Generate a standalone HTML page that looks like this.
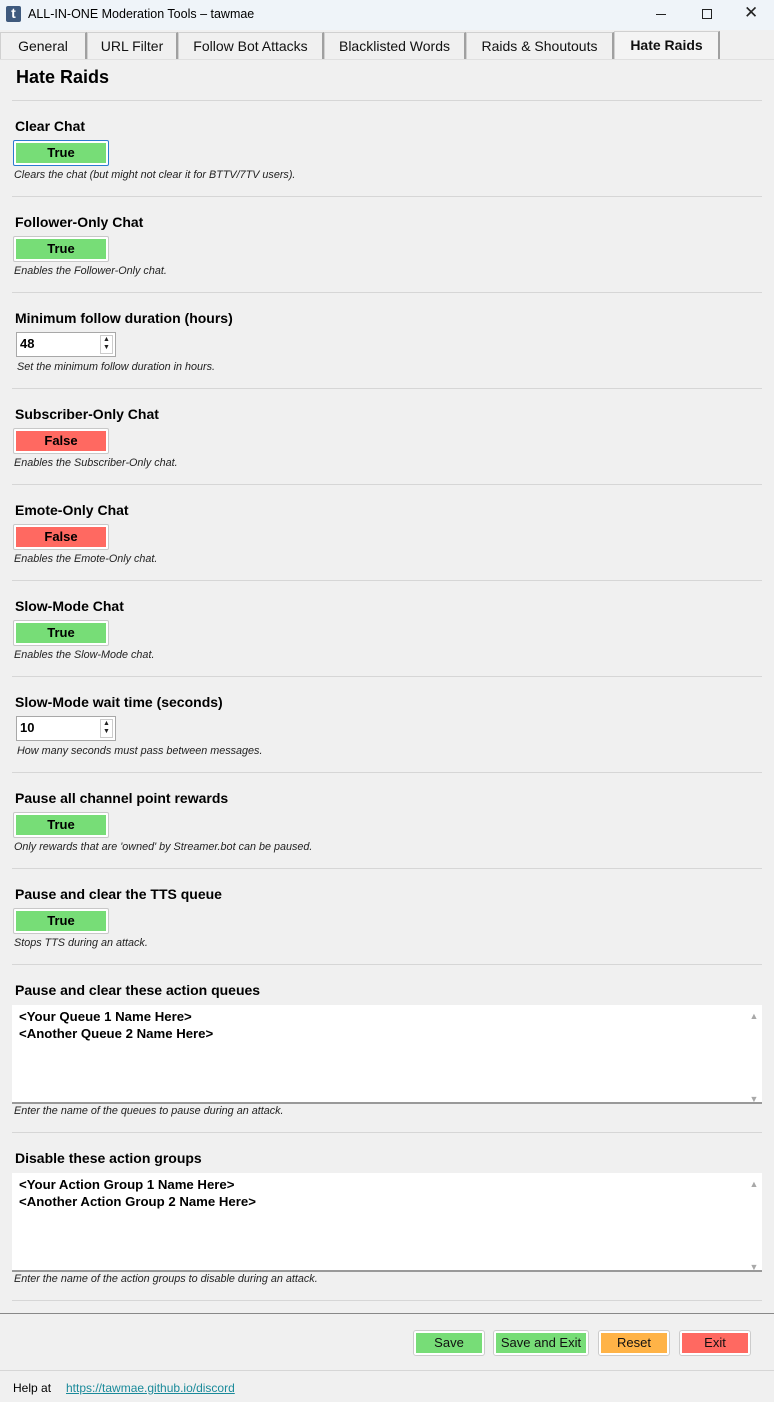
<!DOCTYPE html>
<html><head><meta charset="utf-8"><style>
*{box-sizing:border-box;margin:0;padding:0}
body{width:774px;height:1402px;background:#f0f0f0;font-family:"Liberation Sans",sans-serif;position:relative;overflow:hidden;color:#000}
.a{position:absolute}
.title{left:0;top:0;width:774px;height:30px;background:#eff4f9}
.tab{position:absolute;top:32px;height:27px;border:1px solid #d0d0d0;border-bottom:none;background:#f0f0f0;font-size:14px;text-align:center;line-height:27px;color:#111;border-right:2px solid #a0a0a0}
.lbl{position:absolute;left:15px;font-size:14px;font-weight:bold}
.btn{position:absolute;left:13px;width:96px;height:26px;border:1px solid #c8c8c8;border-radius:2px;padding:2px;background:#fff}
.btn div{width:100%;height:100%;font-size:13px;font-weight:bold;text-align:center;line-height:20px}
.t div{background:#77dd77}.f div{background:#ff6961}
.desc{position:absolute;left:14px;font-size:10.8px;font-style:italic;color:#222}
.hr{position:absolute;left:12px;width:750px;height:1px;background:#d6d6d6}
.num{position:absolute;left:16px;width:100px;height:25px;border:1px solid #a8a8a8;background:#fff;font-size:13px;font-weight:bold;padding:3px 0 0 3px}
.spin{position:absolute;right:2px;top:2px;width:13px;height:19px;border:1px solid #ccc;font-size:7px;line-height:8px;text-align:center;color:#222}
.ta{position:absolute;left:12px;width:750px;height:99px;background:#fff;border-bottom:2px solid #999;font-size:13.2px;font-weight:bold;padding:3px 7px;line-height:17px}
.sb{position:absolute;right:0;top:0;width:16px;height:97px;background:#fff;color:#a8a8a8;font-size:9px;text-align:center}
.bb{position:absolute;top:1330px;height:26px;border:1px solid #ccc;border-radius:3px;padding:2px;background:#fff}
.bb div{height:100%;font-size:13px;text-align:center;line-height:20px;color:#111}
</style></head><body>
<div class="a title"></div>
<div class="a" style="left:6px;top:6px;width:15px;height:16px;background:#3f5a7e;border-radius:2px;color:#fff;font-weight:bold;font-size:14px;line-height:15px;text-align:center">t</div>
<div class="a" style="left:28px;top:7px;font-size:12.5px">ALL-IN-ONE Moderation Tools – tawmae</div>
<div class="a" style="left:656px;top:14px;width:10px;height:1px;background:#222"></div>
<div class="a" style="left:702px;top:9px;width:10px;height:10px;border:1px solid #222"></div>
<div class="a" style="left:744px;top:3px;font-size:17px;color:#222">✕</div>
<div class="tab" style="left:0;width:87px">General</div>
<div class="tab" style="left:87px;width:91px">URL Filter</div>
<div class="tab" style="left:178px;width:146px">Follow Bot Attacks</div>
<div class="tab" style="left:324px;width:142px">Blacklisted Words</div>
<div class="tab" style="left:466px;width:148px">Raids &amp; Shoutouts</div>
<div class="tab" style="left:614px;width:106px;font-weight:bold;background:#f4f4f4;top:31px;height:28px">Hate Raids</div>
<div class="a" style="left:0;top:59px;width:774px;height:1px;background:#e0e0e0"></div>
<div class="a" style="left:16px;top:67px;font-size:18px;font-weight:bold">Hate Raids</div>

<div class="hr" style="top:100px"></div>
<div class="lbl" style="top:118px">Clear Chat</div>
<div class="btn t" style="top:140px;border:1px solid #2b7bd0"><div>True</div></div>
<div class="desc" style="top:169px">Clears the chat (but might not clear it for BTTV/7TV users).</div>

<div class="hr" style="top:196px"></div>
<div class="lbl" style="top:214px">Follower-Only Chat</div>
<div class="btn t" style="top:236px"><div>True</div></div>
<div class="desc" style="top:265px">Enables the Follower-Only chat.</div>

<div class="hr" style="top:292px"></div>
<div class="lbl" style="top:310px">Minimum follow duration (hours)</div>
<div class="num" style="top:332px">48<div class="spin">▲<br>▼</div></div>
<div class="desc" style="left:17px;top:361px">Set the minimum follow duration in hours.</div>

<div class="hr" style="top:388px"></div>
<div class="lbl" style="top:406px">Subscriber-Only Chat</div>
<div class="btn f" style="top:428px"><div>False</div></div>
<div class="desc" style="top:457px">Enables the Subscriber-Only chat.</div>

<div class="hr" style="top:484px"></div>
<div class="lbl" style="top:502px">Emote-Only Chat</div>
<div class="btn f" style="top:524px"><div>False</div></div>
<div class="desc" style="top:553px">Enables the Emote-Only chat.</div>

<div class="hr" style="top:580px"></div>
<div class="lbl" style="top:598px">Slow-Mode Chat</div>
<div class="btn t" style="top:620px"><div>True</div></div>
<div class="desc" style="top:649px">Enables the Slow-Mode chat.</div>

<div class="hr" style="top:676px"></div>
<div class="lbl" style="top:694px">Slow-Mode wait time (seconds)</div>
<div class="num" style="top:716px">10<div class="spin">▲<br>▼</div></div>
<div class="desc" style="left:17px;top:745px">How many seconds must pass between messages.</div>

<div class="hr" style="top:772px"></div>
<div class="lbl" style="top:790px">Pause all channel point rewards</div>
<div class="btn t" style="top:812px"><div>True</div></div>
<div class="desc" style="top:841px">Only rewards that are 'owned' by Streamer.bot can be paused.</div>

<div class="hr" style="top:868px"></div>
<div class="lbl" style="top:886px">Pause and clear the TTS queue</div>
<div class="btn t" style="top:908px"><div>True</div></div>
<div class="desc" style="top:937px">Stops TTS during an attack.</div>

<div class="hr" style="top:964px"></div>
<div class="lbl" style="top:982px">Pause and clear these action queues</div>
<div class="ta" style="top:1005px">&lt;Your Queue 1 Name Here&gt;<br>&lt;Another Queue 2 Name Here&gt;<div class="sb"><div style="margin-top:3px">▲</div><div style="margin-top:66px">▼</div></div></div>
<div class="desc" style="top:1105px">Enter the name of the queues to pause during an attack.</div>

<div class="hr" style="top:1132px"></div>
<div class="lbl" style="top:1150px">Disable these action groups</div>
<div class="ta" style="top:1173px">&lt;Your Action Group 1 Name Here&gt;<br>&lt;Another Action Group 2 Name Here&gt;<div class="sb"><div style="margin-top:3px">▲</div><div style="margin-top:66px">▼</div></div></div>
<div class="desc" style="top:1273px">Enter the name of the action groups to disable during an attack.</div>

<div class="hr" style="top:1300px"></div>
<div class="a" style="left:0;top:1313px;width:774px;height:1px;background:#888"></div>
<div class="bb" style="left:413px;width:72px"><div style="background:#77dd77">Save</div></div>
<div class="bb" style="left:493px;width:96px"><div style="background:#77dd77">Save and Exit</div></div>
<div class="bb" style="left:598px;width:72px"><div style="background:#ffb347">Reset</div></div>
<div class="bb" style="left:679px;width:72px"><div style="background:#ff6961">Exit</div></div>
<div class="a" style="left:0;top:1370px;width:774px;height:1px;background:#d6d6d6"></div>
<div class="a" style="left:13px;top:1381px;font-size:12px">Help at</div>
<div class="a" style="left:66px;top:1381px;font-size:12px;color:#1a8a9a;text-decoration:underline">https://tawmae.github.io/discord</div>
</body></html>
